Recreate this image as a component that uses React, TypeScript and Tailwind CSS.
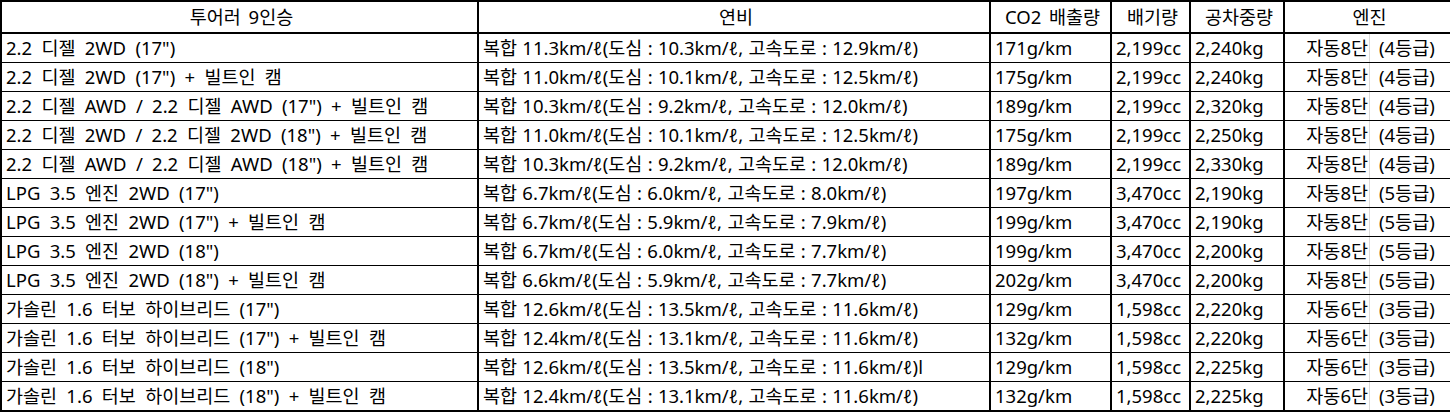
// Spec sheet for the 9-seat tourer trims, drawn like the original spreadsheet grid.

const font = { fontFamily: '"Noto Sans", "Noto Sans CJK KR", sans-serif' };

type Row = {
  trim: string;
  mileage: string;
  co2: string;
  cc: string;
  weight: string;
  gear: string;
  grade: string;
};

const rows: Row[] = [
  { trim: '2.2 디젤 2WD (17")', mileage: "복합 11.3km/ℓ(도심 : 10.3km/ℓ, 고속도로 : 12.9km/ℓ)", co2: "171g/km", cc: "2,199cc", weight: "2,240kg", gear: "자동8단", grade: "(4등급)" },
  { trim: '2.2 디젤 2WD (17") + 빌트인 캠', mileage: "복합 11.0km/ℓ(도심 : 10.1km/ℓ, 고속도로 : 12.5km/ℓ)", co2: "175g/km", cc: "2,199cc", weight: "2,240kg", gear: "자동8단", grade: "(4등급)" },
  { trim: '2.2 디젤 AWD / 2.2 디젤 AWD (17") + 빌트인 캠', mileage: "복합 10.3km/ℓ(도심 : 9.2km/ℓ, 고속도로 : 12.0km/ℓ)", co2: "189g/km", cc: "2,199cc", weight: "2,320kg", gear: "자동8단", grade: "(4등급)" },
  { trim: '2.2 디젤 2WD / 2.2 디젤 2WD (18") + 빌트인 캠', mileage: "복합 11.0km/ℓ(도심 : 10.1km/ℓ, 고속도로 : 12.5km/ℓ)", co2: "175g/km", cc: "2,199cc", weight: "2,250kg", gear: "자동8단", grade: "(4등급)" },
  { trim: '2.2 디젤 AWD / 2.2 디젤 AWD (18") + 빌트인 캠', mileage: "복합 10.3km/ℓ(도심 : 9.2km/ℓ, 고속도로 : 12.0km/ℓ)", co2: "189g/km", cc: "2,199cc", weight: "2,330kg", gear: "자동8단", grade: "(4등급)" },
  { trim: 'LPG 3.5 엔진 2WD (17")', mileage: "복합 6.7km/ℓ(도심 : 6.0km/ℓ, 고속도로 : 8.0km/ℓ)", co2: "197g/km", cc: "3,470cc", weight: "2,190kg", gear: "자동8단", grade: "(5등급)" },
  { trim: 'LPG 3.5 엔진 2WD (17") + 빌트인 캠', mileage: "복합 6.7km/ℓ(도심 : 5.9km/ℓ, 고속도로 : 7.9km/ℓ)", co2: "199g/km", cc: "3,470cc", weight: "2,190kg", gear: "자동8단", grade: "(5등급)" },
  { trim: 'LPG 3.5 엔진 2WD (18")', mileage: "복합 6.7km/ℓ(도심 : 6.0km/ℓ, 고속도로 : 7.7km/ℓ)", co2: "199g/km", cc: "3,470cc", weight: "2,200kg", gear: "자동8단", grade: "(5등급)" },
  { trim: 'LPG 3.5 엔진 2WD (18") + 빌트인 캠', mileage: "복합 6.6km/ℓ(도심 : 5.9km/ℓ, 고속도로 : 7.7km/ℓ)", co2: "202g/km", cc: "3,470cc", weight: "2,200kg", gear: "자동8단", grade: "(5등급)" },
  { trim: '가솔린 1.6 터보 하이브리드 (17")', mileage: "복합 12.6km/ℓ(도심 : 13.5km/ℓ, 고속도로 : 11.6km/ℓ)", co2: "129g/km", cc: "1,598cc", weight: "2,220kg", gear: "자동6단", grade: "(3등급)" },
  { trim: '가솔린 1.6 터보 하이브리드 (17") + 빌트인 캠', mileage: "복합 12.4km/ℓ(도심 : 13.1km/ℓ, 고속도로 : 11.6km/ℓ)", co2: "132g/km", cc: "1,598cc", weight: "2,220kg", gear: "자동6단", grade: "(3등급)" },
  { trim: '가솔린 1.6 터보 하이브리드 (18")', mileage: "복합 12.6km/ℓ(도심 : 13.5km/ℓ, 고속도로 : 11.6km/ℓ)l", co2: "129g/km", cc: "1,598cc", weight: "2,225kg", gear: "자동6단", grade: "(3등급)" },
  { trim: '가솔린 1.6 터보 하이브리드 (18") + 빌트인 캠', mileage: "복합 12.4km/ℓ(도심 : 13.1km/ℓ, 고속도로 : 11.6km/ℓ)", co2: "132g/km", cc: "1,598cc", weight: "2,225kg", gear: "자동6단", grade: "(3등급)" },
];

const cols = "grid grid-cols-[475px_510px_119px_77px_92px_1fr] gap-x-[2px]";
const cell = "flex items-center bg-white pl-[4px] whitespace-nowrap overflow-hidden leading-none";

export default function App() {
  return (
    <div
      className="w-[1450px] h-[414px] overflow-hidden bg-white text-[18.5px] text-black [word-spacing:3px]"
      style={font}
    >
      <div className="flex flex-col bg-black pt-[2px] pl-[2px] pb-[2px]">
        <div className={`${cols} h-[30px]`}>
          <div className={`${cell} justify-center pl-0`}>투어러 9인승</div>
          <div className={`${cell} justify-center pl-0`}>연비</div>
          <div className={`${cell} justify-center pl-0`}>CO2 배출량</div>
          <div className={`${cell} justify-center pl-0`}>배기량</div>
          <div className={`${cell} justify-center pl-0`}>공차중량</div>
          <div className={`${cell} justify-center pl-0`}>엔진</div>
        </div>
        <div className={`${cols} mt-[2px] gap-y-[1px] auto-rows-[28px]`}>
          {rows.map((r) => (
            <div key={r.trim + r.mileage} className="contents">
              <div className={`${cell} [word-spacing:4.5px]`}>{r.trim}</div>
              <div className={`${cell} [word-spacing:0.5px]`}>{r.mileage}</div>
              <div className={cell}>{r.co2}</div>
              <div className={cell}>{r.cc}</div>
              <div className={cell}>{r.weight}</div>
              <div className={`${cell} relative pl-0`}>
                {/* faint sheet gridline showing through the cell */}
                <span className="absolute left-[84px] top-0 bottom-0 w-px bg-[#dadada]" />
                <span className="relative flex w-[79px] justify-end">{r.gear}</span>
                <span className="relative pl-[11px]">{r.grade}</span>
              </div>
            </div>
          ))}
        </div>
      </div>
    </div>
  );
}
